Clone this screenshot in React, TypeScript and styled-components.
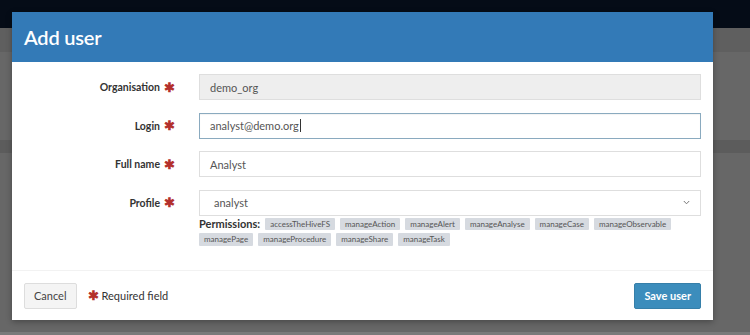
import React, { FC } from 'react';
import styled, { createGlobalStyle } from 'styled-components';

const GlobalStyle = createGlobalStyle`
  html, body {
    margin: 0;
    padding: 0;
  }
  body {
    font-family: Lato, "Open Sans", "Liberation Sans", sans-serif;
    background: #666;
  }
  * {
    box-sizing: border-box;
  }
`;

const Page = styled.div`
  position: relative;
  width: 750px;
  height: 335px;
  overflow: hidden;
  background: #676767;
  display: flex;
  flex-direction: column;
`;

const TopBar = styled.div`
  height: 28px;
  background: #050c17;
`;

const SubBar = styled.div`
  height: 24px;
  background: #5f5f5f;
`;

const Band = styled.div<{ top: number; height: number }>`
  margin-top: ${({ top }): string => `${top}px`};
  height: ${({ height }): string => `${height}px`};
  background: #5c5c5c;
`;

const BottomLine = styled.div`
  margin-top: auto;
  height: 3px;
  background: #7a7a7a;
`;

const Modal = styled.div`
  position: absolute;
  left: 12px;
  top: 12px;
  width: 701px;
  height: 308px;
  background: #fff;
  display: flex;
  flex-direction: column;
  box-shadow: 0 2px 6px rgba(0, 0, 0, 0.3);
`;

const ModalHeader = styled.header`
  height: 50px;
  background: #337ab7;
  display: flex;
  align-items: center;
  padding: 0 12px;
`;

const ModalTitle = styled.h4`
  margin: 0;
  color: #fff;
  font-size: 20px;
  font-weight: 600;
  letter-spacing: -0.2px;
`;

const ModalBody = styled.section`
  flex: 1;
  padding: 12px 12px 0 12px;
  display: flex;
  flex-direction: column;
  gap: 12.5px;
`;

const FormRow = styled.div`
  display: grid;
  grid-template-columns: 151px 1fr;
  column-gap: 24px;
  align-items: start;
`;

const Label = styled.label`
  height: 26px;
  display: flex;
  align-items: center;
  justify-content: flex-end;
  gap: 4px;
  font-size: 10.5px;
  font-weight: 700;
  color: #333;
`;

const Star = styled.span`
  color: #b3302c;
  font-size: 13px;
  line-height: 1;
  font-weight: 700;
`;

const Field = styled.div<{ disabled?: boolean; focused?: boolean; inset?: number }>`
  height: 26px;
  display: flex;
  align-items: center;
  padding-left: ${({ inset }): string => `${inset ?? 10}px`};
  padding-right: 8px;
  font-size: 11px;
  color: #555;
  background: ${({ disabled }): string => (disabled ? '#eeeeee' : '#fff')};
  border: 1px solid
    ${({ focused }): string => (focused ? '#8aaabf' : '#dedede')};
  box-shadow: ${({ focused }): string =>
    focused ? 'inset 0 1px 1px rgba(0,0,0,0.05)' : 'none'};
`;

const Caret = styled.span`
  display: inline-block;
  width: 1px;
  height: 13px;
  margin-left: 1px;
  background: #333;
`;

const Chevron = styled.svg`
  margin-left: auto;
  margin-right: 2px;
`;

const ProfileCell = styled.div`
  display: flex;
  flex-direction: column;
  gap: 2px;
`;

const Permissions = styled.div`
  display: flex;
  flex-wrap: wrap;
  align-items: center;
  gap: 3px 5px;
`;

const PermLabel = styled.span`
  font-size: 11px;
  font-weight: 700;
  color: #333;
  line-height: 12px;
`;

const Tag = styled.span`
  height: 12.5px;
  line-height: 12.5px;
  padding: 0 5px;
  background: #d6dae0;
  color: #555;
  font-size: 8px;
  border-radius: 1px;
`;

const ModalFooter = styled.footer`
  height: 50px;
  border-top: 1px solid #f2f2f2;
  padding: 0 12px;
  display: flex;
  align-items: center;
  gap: 11px;
`;

const Button = styled.button<{ primary?: boolean }>`
  height: 26px;
  padding: 0 9px;
  font-family: inherit;
  font-size: 11px;
  font-weight: ${({ primary }): string => (primary ? '700' : '400')};
  color: ${({ primary }): string => (primary ? '#fff' : '#444')};
  background: ${({ primary }): string => (primary ? '#3c8dbc' : '#f4f4f4')};
  border: 1px solid ${({ primary }): string => (primary ? '#367fa9' : '#ddd')};
  border-radius: 2px;
  margin-left: ${({ primary }): string => (primary ? 'auto' : '0')};
`;

const RequiredNote = styled.span`
  display: flex;
  align-items: center;
  gap: 3px;
  font-size: 11px;
  color: #333;
`;

const permissions = [
  'accessTheHiveFS',
  'manageAction',
  'manageAlert',
  'manageAnalyse',
  'manageCase',
  'manageObservable',
  'managePage',
  'manageProcedure',
  'manageShare',
  'manageTask',
];

const App: FC = () => {
  return (
    <>
      <GlobalStyle />
      <Page>
        <TopBar />
        <SubBar />
        <Band top={88} height={13} />
        <BottomLine />
        <Modal>
          <ModalHeader>
            <ModalTitle>Add user</ModalTitle>
          </ModalHeader>
          <ModalBody>
            <FormRow>
              <Label>
                Organisation <Star>✱</Star>
              </Label>
              <Field disabled>demo_org</Field>
            </FormRow>
            <FormRow>
              <Label>
                Login <Star>✱</Star>
              </Label>
              <Field focused>
                analyst@demo.org
                <Caret />
              </Field>
            </FormRow>
            <FormRow>
              <Label>
                Full name <Star>✱</Star>
              </Label>
              <Field>Analyst</Field>
            </FormRow>
            <FormRow>
              <Label>
                Profile <Star>✱</Star>
              </Label>
              <ProfileCell>
                <Field inset={14}>
                  analyst
                  <Chevron width="7" height="5" viewBox="0 0 7 5">
                    <path d="M0.8 1 L3.5 3.8 L6.2 1" fill="none" stroke="#777" strokeWidth="1" />
                  </Chevron>
                </Field>
                <Permissions>
                  <PermLabel>Permissions:</PermLabel>
                  {permissions.map((p) => (
                    <Tag key={p}>{p}</Tag>
                  ))}
                </Permissions>
              </ProfileCell>
            </FormRow>
          </ModalBody>
          <ModalFooter>
            <Button>Cancel</Button>
            <RequiredNote>
              <Star>✱</Star> Required field
            </RequiredNote>
            <Button primary>Save user</Button>
          </ModalFooter>
        </Modal>
      </Page>
    </>
  );
};

export default App;
